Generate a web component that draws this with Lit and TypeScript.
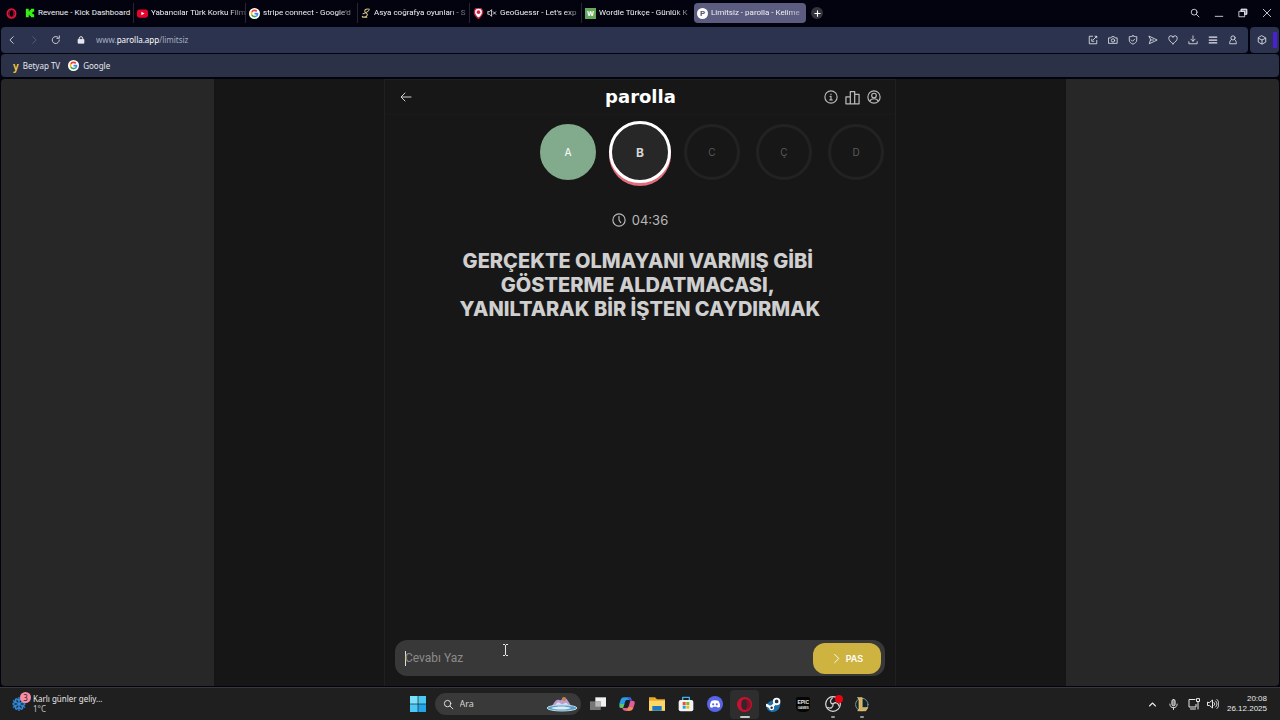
import { LitElement, html, svg, css, TemplateResult, SVGTemplateResult } from "lit";
import { customElement, property, state } from "lit/decorators.js";
import { classMap } from "lit/directives/class-map.js";

const icon = (size: number, body: SVGTemplateResult, width = 2): TemplateResult => html`
  <svg width=${size} height=${size} viewBox="0 0 24 24" fill="none" stroke="currentColor"
    stroke-width=${width} stroke-linecap="round" stroke-linejoin="round" aria-hidden="true">${body}</svg>`;

const glyphs: Record<string, SVGTemplateResult> = {
  operaLine: svg`<ellipse cx="12" cy="12" rx="8.8" ry="9.6" stroke="#e8153c" stroke-width="4"/><ellipse cx="12" cy="12" rx="5" ry="8" stroke="#a80d2c" stroke-width="2"/>`,
  kick: svg`<path d="M2 2h7v6h2V5h3V2h8v7h-3v2h-2v2h2v2h3v7h-8v-3h-3v-3H9v6H2z" fill="#37f013" stroke="none"/>`,
  youtube: svg`<rect x="0" y="3" width="24" height="18" rx="5" fill="#e4042e" stroke="none"/><path d="M9.500 8v8l7-4z" fill="#fff" stroke="none"/>`,
  google: svg`<circle cx="12" cy="12" r="12" fill="#fff" stroke="none"/>
    <g stroke-width="3.600" stroke-linecap="butt"><path d="M6.300 8.500A6.800 6.800 0 0 1 17 7.200" stroke="#ea4335"/><path d="M6.300 15.500a6.800 6.800 0 0 1 0-7.200" stroke="#fbbc05"/><path d="M16.800 16.900a6.800 6.800 0 0 1-10.500-1.500" stroke="#34a853"/><path d="M12 12.200h6.700a6.800 6.800 0 0 1-2 4.800" stroke="#4285f4"/></g>`,
  seterra: svg`<path d="M20 3C15 1 8 3 9 8s8 4 6 9-9 6-12 3M5 14c4-1 9-3 14-8M4 22h10" stroke="#dccb8a" stroke-width="2.500"/>`,
  pin: svg`<path d="M12 23S3 15 3 9a9 9 0 0 1 18 0c0 6-9 14-9 14z" fill="#fff" stroke="#c8203c" stroke-width="3"/><circle cx="12" cy="9" r="4" fill="#d41f3f" stroke="none"/>`,
  muted: svg`<path d="M2 9v6h4l5 5V4L6 9zM15 9l6 6M21 9l-6 6"/>`,
  plus: svg`<path d="M12 5v14M5 12h14"/>`,
  search: svg`<circle cx="10" cy="10" r="7"/><path d="m15.500 15.500 6 6"/>`,
  minimize: svg`<path d="M3 20h18"/>`,
  restore: svg`<path d="M8 8V3h13v12h-5"/><rect x="3" y="8" width="13" height="13"/><path d="M8 3h13v12h-5V8H8z" fill="currentColor" fill-opacity=".5"/>`,
  close: svg`<path d="m3 3 18 18M21 3 3 21"/>`,
  back: svg`<path d="m15 4-8 8 8 8"/>`,
  forward: svg`<path d="m9 4 8 8-8 8"/>`,
  reload: svg`<path d="M20 12a8.500 8.500 0 1 1-3-6.500M20 2v6h-6"/>`,
  lock: svg`<rect x="3" y="10" width="18" height="12" rx="1" fill="currentColor"/><path d="M7 10V7a5 5 0 0 1 10 0v3" stroke-width="3"/>`,
  edit: svg`<path d="M11 3H3v18h18v-8M21 3l-9 9M9 10v5h5M17 3h4v4"/>`,
  camera: svg`<path d="M2 7h5l2-3h6l2 3h5v13H2z"/><circle cx="12" cy="13" r="4"/>`,
  shield: svg`<path d="M12 2c3 2 6 2 9 2v8c0 5-4 8-9 10-5-2-9-5-9-10V4c3 0 6 0 9-2z"/><path d="m8 12 3 3 5-5"/>`,
  send: svg`<path d="M3 3 22 12 3 21l3-9zM6 12h7"/>`,
  heart: svg`<path d="M12 21C5 16 2 12 2 8a5 5 0 0 1 10-2 5 5 0 0 1 10 2c0 4-3 8-10 13z"/>`,
  download: svg`<path d="M12 2v13M7 10l5 5 5-5M2 16v5h20v-5"/>`,
  menu: svg`<path d="M3 5h18M3 12h18M3 19h18" stroke-width="3"/>`,
  person: svg`<circle cx="12" cy="7" r="5"/><path d="M8 11c-3 2-4 5-4 10h16c0-5-1-8-4-10"/>`,
  cube: svg`<path d="m12 2 9 5v10l-9 5-9-5V7zM4 8l8 4 8-4M12 12v9"/>`,
  arrow: svg`<path d="M22 12H3M10 4l-8 8 8 8"/>`,
  info: svg`<circle cx="12" cy="12" r="10.500"/><path d="M10.500 11H12v6M10 17h4M12 7v.5"/>`,
  chart: svg`<path d="M1.500 11h7v11h-7zM8.500 2.500h7V22h-7zM15.500 7h7v15h-7z"/>`,
  account: svg`<circle cx="12" cy="12" r="10.500"/><circle cx="12" cy="9.500" r="4"/><path d="M5 19c1-3 3-4 7-4s6 1 7 4"/>`,
  clock: svg`<circle cx="12" cy="12" r="10.500"/><path d="M12 5.500V12l3 4.500"/>`,
  chevron: svg`<path d="m8 3 9 9-9 9"/>`,
  up: svg`<path d="m4 16 8-8 8 8"/>`,
  mic: svg`<rect x="8.500" y="1" width="7" height="14" rx="3.500" fill="currentColor" fill-opacity=".5"/><path d="M4 11c0 5 3 8 8 8s8-3 8-8M12 19v4"/>`,
  network: svg`<path d="M14 3H2v15h14v-5M5 22h10M20 8v14M17 2v5h6V2z"/>`,
  volume: svg`<path d="M1 9v6h4l6 5V4L5 9zM14 9c2 2 2 4 0 6M17 6c4 4 4 8 0 12M20 3c5 5 5 13 0 18"/>`,
  snow: svg`<g stroke="#2f87d6" stroke-width="2.500"><path d="M12 1v22M2.500 6.500l19 11M21.500 6.500l-19 11M8 3l4 4 4-4M8 21l4-4 4 4M2 11l5-2-1-5M22 13l-5 2 1 5M22 11l-5-2 1-5M2 13l5 2-1 5"/></g>`,
  windows: svg`<g stroke="none" fill="#4cc8f5"><path d="M0 0h11.500v11.500H0z" fill="#7be0fb"/><path d="M12.500 0H24v11.500H12.500z"/><path d="M0 12.500h11.500V24H0z"/><path d="M12.500 12.500H24V24H12.500z" fill="#22a4e8"/></g>`,
  tasks: svg`<g stroke="none"><path d="M8 2h16v14H8z" fill="#f1f1f1"/><path d="M0 8h16v13H0z" fill="#777"/><path d="M8 8h8v8H8z" fill="#b8b8b8"/></g>`,
  copilot: svg`<g stroke="none"><path d="M8 2h8c2 0 2 2 3 4H12c-3 0-3 4-5 10H4c-5 0-4-4-2-9 1-3 2-5 6-5z" fill="#2a9ce4"/><path d="M16 22H9c-3 0-3-2-4-4h6c4 0 4-5 6-11h3c5 0 4 4 2 9-1 4-2 6-6 6z" fill="#e25b9a"/><path d="M2 12h6l-2 6H4c-4 0-4-2-2-6z" fill="#63c45b"/><path d="M16 2h-5c3 1 4 5 6 5h3z" fill="#3b56d9"/><path d="M9 22c3 0 4-2 5-5h7c-1 3-2 5-5 5z" fill="#f09148"/></g>`,
  folder: svg`<g stroke="none"><path d="M0 2h9l3 3h12v17H0z" fill="#e9a827"/><path d="M0 7h24v15H0z" fill="#fcd667"/><path d="M5 15h14v7H5z" fill="#1779c5"/></g>`,
  store: svg`<path d="M7 7V2h10v5" stroke="#3fb5ec"/><rect x="1" y="6" width="22" height="17" rx="3" fill="#f3f3f3" stroke="none"/><g stroke="none"><path d="M7 9h4.500v4.500H7z" fill="#ee5030"/><path d="M12.500 9H17v4.500h-4.500z" fill="#7ab929"/><path d="M7 14.500h4.500V19H7z" fill="#24a0e2"/><path d="M12.500 14.500H17V19h-4.500z" fill="#f8ba17"/></g>`,
  discord: svg`<circle cx="12" cy="12" r="12" fill="#5964e8" stroke="none"/><path d="M7 7c3-1 7-1 10 0 2 3 3 6 2.500 9-1 1-3 1.500-3.500 1.500L15 16H9l-1 1.500c-1 0-3-.5-3.500-1.500C4 13 5 10 7 7z" fill="#fff" stroke="none"/><circle cx="9.300" cy="12.500" r="1.600" fill="#5964e8" stroke="none"/><circle cx="14.700" cy="12.500" r="1.600" fill="#5964e8" stroke="none"/>`,
  opera: svg`<circle cx="12" cy="12" r="12" fill="#c9122f" stroke="none"/><path d="M9 4c7-3 13 2 13 8s-6 11-13 8c8-1 8-15 0-16z" fill="#8e0d28" stroke="none"/><ellipse cx="11.500" cy="12" rx="4.700" ry="8" fill="#32262b" stroke="none"/>`,
  steam: svg`<path d="M0 14C2 8 8 5 14 5l9 5c0 8-5 14-12 14C5 24 1 20 0 14z" fill="#1c6fa8" stroke="none"/><circle cx="17" cy="7" r="4.500" fill="#21344a" stroke="#fff" stroke-width="3"/><path d="m1 13 7 4 5-5" stroke="#fff" stroke-width="4"/><circle cx="9" cy="17" r="3" stroke="#fff" fill="#21344a"/>`,
  obs: svg`<circle cx="12" cy="12" r="11" fill="#1c1c1c" stroke="#ddd" stroke-width="1.800"/><g stroke="#ccc" stroke-width="2"><path d="M12 12C7 11 7 6 11 3M12 12c4-4 8-1 9 3M12 12c1 5-4 8-8 5"/></g>`,
  league: svg`<circle cx="12.500" cy="12" r="10" fill="#102528" stroke="#84989a" stroke-width="1.500"/><path d="M6 1h7v16h9l-3 5H6l2-3V4z" fill="#d5af58" stroke="#f0dd9b" stroke-width="1"/>`,
};

@customElement("browser-chrome")
export class BrowserChrome extends LitElement {
  @property() address = "";

  static styles = css`
    :host { display: block; font: 8px/12px "Noto Sans", sans-serif; color: #e6e7ee; background: #02030f; }
    svg { display: block; flex: none; }
    button { display: grid; place-items: center; padding: 0; border: 0; background: none; color: inherit; font: inherit; }
    a { color: inherit; text-decoration: none; }
    .strip { display: flex; align-items: center; height: 26px; }
    .brand { width: 22px; }
    .tabs { display: flex; min-width: 0; }
    .tab { display: flex; align-items: center; gap: 3px; box-sizing: border-box; width: 112px; height: 20px;
      padding: 0 1px 0 3px; border-right: 1px solid #252631; font-family: Roboto, sans-serif; color: #f0f0f4; }
    .tab.last { border-color: transparent; }
    .tab.active { background: #5c5c80; border: 0; border-radius: 4px; }
    .label { flex: 1; white-space: nowrap; text-align: left; mask-image: linear-gradient(90deg, #000 80%, #0004); }
    .full { mask-image: none; }
    .badge { display: block; width: 11px; flex: none; font-weight: 700; font-size: 8px; line-height: 11px; text-align: center; color: #fff; }
    .green { background: #65a85d; }
    .round { border-radius: 50%; background: #fff; color: #55557a; }
    .add { width: 12px; height: 12px; margin-left: 5px; border-radius: 50%; background: #33343d; color: #fff; }
    .window { display: flex; margin-left: auto; padding-right: 1px; }
    .window button { width: 24px; height: 24px; }
    .bars { display: flex; gap: 2px; padding: 1px 1px 0; }
    .bar { display: flex; align-items: center; height: 26px; border-radius: 4px; background: #2b334e; }
    .main { flex: 1; }
    .nav { width: 22px; height: 22px; }
    .dim { color: #59617a; }
    .lock { margin: 0 11px 0 10px; }
    .url { color: #a9aec0; }
    .url b { font-weight: 400; color: #fff; }
    .tools { display: flex; margin-left: auto; padding-right: 5px; }
    .tools button { width: 20px; height: 22px; }
    .side { width: 29px; justify-content: space-between; overflow: hidden; }
    .side button { padding-left: 7px; }
    .accent { width: 4px; height: 16px; margin-right: 2px; background: #4a1fd8; }
    .marks { gap: 8px; height: 23px; margin: 1px 1px 2px; padding-left: 12px; background: #2b3248; }
    .marks a { display: flex; align-items: center; gap: 4px; }
    .y { font-size: 10px; color: #ecc53d; font-weight: 700; }
  `;

  private tabs: { name: string; mark: TemplateResult; full?: boolean }[] = [
    { name: "Revenue - Kick Dashboard", mark: icon(10, glyphs.kick), full: true },
    { name: "Yabancılar Türk Korku Film", mark: icon(11, glyphs.youtube) },
    { name: "stripe connect - Google'd", mark: icon(11, glyphs.google) },
    { name: "Asya coğrafya oyunları - S", mark: icon(10, glyphs.seterra) },
    { name: "GeoGuessr - Let's exp", mark: html`${icon(11, glyphs.pin)}${icon(10, glyphs.muted)}` },
    { name: "Wordle Türkçe - Günlük K", mark: html`<span class="badge green">W</span>` },
    { name: "Limitsiz - parolla - Kelime", mark: html`<span class="badge round">P</span>` },
  ];

  render() {
    const last = this.tabs.length - 1;
    return html`
      <div class="strip">
        <button class="brand" aria-label="Opera">${icon(11, glyphs.operaLine)}</button>
        <div class="tabs" role="tablist">
          ${this.tabs.map((t, i) => html`
            <button role="tab" aria-selected=${i === last}
              class=${classMap({ tab: true, active: i === last, last: i === last - 1 })}>
              ${t.mark}<span class=${classMap({ label: true, full: !!t.full })}>${t.name}</span>
            </button>`)}
        </div>
        <button class="add" aria-label="Yeni sekme">${icon(9, glyphs.plus, 3)}</button>
        <div class="window">
          ${["search", "minimize", "restore", "close"].map((n) => html`<button aria-label=${n}>${icon(10, glyphs[n])}</button>`)}
        </div>
      </div>
      <div class="bars">
        <div class="bar main">
          <button class="nav" aria-label="Geri">${icon(10, glyphs.back)}</button>
          <button class="nav dim" aria-label="İleri">${icon(10, glyphs.forward)}</button>
          <button class="nav" aria-label="Yenile">${icon(10, glyphs.reload)}</button>
          <span class="lock">${icon(8, glyphs.lock)}</span>
          <a class="url" href="#">www.<b>${this.address}</b>/limitsiz</a>
          <div class="tools">
            ${["edit", "camera", "shield", "send", "heart", "download", "menu", "person"].map(
              (n) => html`<button aria-label=${n}>${icon(10, glyphs[n])}</button>`)}
          </div>
        </div>
        <div class="bar side"><button aria-label="Uzantılar">${icon(10, glyphs.cube)}</button><span class="accent"></span></div>
      </div>
      <nav class="bar marks">
        <a href="#"><span class="y">y</span>Betyap TV</a>
        <a href="#">${icon(11, glyphs.google)}Google</a>
      </nav>`;
  }
}

@customElement("parolla-game")
export class ParollaGame extends LitElement {
  @state() private letters = [
    { char: "A", status: "right" },
    { char: "B", status: "current" },
    { char: "C", status: "" },
    { char: "Ç", status: "" },
    { char: "D", status: "" },
  ];

  static styles = css`
    :host { display: flex; justify-content: center; box-sizing: border-box; min-height: 0; padding: 0 1px 1px;
      background: #02030f; font-family: Inter, sans-serif; color: #cfcfcf; }
    svg { display: block; flex: none; }
    button { padding: 0; border: 0; background: none; color: inherit; font: inherit; }
    .page { display: flex; flex: 1; justify-content: center; background: #272727; border-radius: 4px; overflow: hidden; }
    .middle { display: flex; justify-content: center; width: 66.6%; background: #161616; }
    .app { display: flex; flex-direction: column; box-sizing: border-box; width: 60%; min-width: 512px;
      border: solid #202020; border-width: 1px 1px 0; background: #171717; }
    header { display: grid; grid-template-columns: 1fr auto 1fr; align-items: center; height: 34px; padding: 0 14px 0 15px; border-bottom: 1px solid #1a1a1a; }
    .icons { display: flex; justify-content: flex-end; gap: 7px; color: #b9b9b9; }
    h1 { margin: 0; font: 700 18px/24px "DejaVu Sans", sans-serif; color: #fff; }
    .letters { display: grid; grid-template-columns: repeat(7, 72px); justify-content: center; align-items: center;
      height: 74px; margin: 0; padding: 0; list-style: none; }
    .letters li { display: grid; place-items: center; justify-self: center; box-sizing: border-box; width: 56px; height: 56px;
      border: 3px solid #222; border-radius: 50%; font-size: 10px; color: #5a5a5a; }
    .letters .right { grid-column-start: 3; border-color: #82aa8c; background: #82aa8c; color: #eef5ef; font-weight: 500; }
    .letters .current { width: 62px; height: 62px; border-color: #fff; background: #272727; box-shadow: 0 3px 0 #e06c7c; color: #d5d5d5; font-weight: 700; font-size: 12px; }
    .timer { display: flex; align-items: center; justify-content: center; gap: 6px; margin-top: 21px; font-size: 13px; line-height: 20px; color: #b9b9b9; }
    .question { margin: 19px 0 0; font: 800 20px/24px Inter, sans-serif; text-align: center; }
    form { display: flex; align-items: center; margin: auto 10px 10px; padding: 2px 4px 2px 10px; height: 32px; border-radius: 12px; background: #383838; }
    input { flex: 1; min-width: 0; padding: 0; border: 0; outline: 0; background: none; color: #ddd; font: 12px/20px Roboto, sans-serif; }
    input::placeholder { color: #8b8b8b; opacity: 1; }
    .caret { width: 1px; height: 15px; margin-right: -1px; background: #ddd; }
    .pass { display: flex; align-items: center; justify-content: center; gap: 4px; width: 68px; height: 31px;
      border-radius: 12px; background: #cfb340; color: #fff; font-size: 9px; font-weight: 600; }
  `;

  render() {
    return html`
      <div class="page"><div class="middle"><main class="app">
        <header>
          <button aria-label="Geri">${icon(12, glyphs.arrow)}</button>
          <h1>parolla</h1>
          <div class="icons">
            <button aria-label="Bilgi">${icon(14, glyphs.info)}</button>
            <button aria-label="İstatistik">${icon(15, glyphs.chart)}</button>
            <button aria-label="Hesap">${icon(14, glyphs.account)}</button>
          </div>
        </header>
        <ol class="letters">${this.letters.map((l) => html`<li class=${l.status}>${l.char}</li>`)}</ol>
        <div class="timer">${icon(14, glyphs.clock)}<time>04:36</time></div>
        <p class="question">GERÇEKTE OLMAYANI VARMIŞ GİBİ&nbsp;<br>GÖSTERME ALDATMACASI,&nbsp;<br>YANILTARAK BİR İŞTEN CAYDIRMAK</p>
        <form @submit=${(e: Event) => e.preventDefault()}>
          <span class="caret"></span>
          <input type="text" aria-label="Cevabı Yaz" placeholder="Cevabı Yaz" autocomplete="off">
          <button class="pass" type="button">${icon(11, glyphs.chevron)}PAS</button>
        </form>
      </main></div></div>`;
  }
}

@customElement("task-bar")
export class TaskBar extends LitElement {
  static styles = css`
    :host { display: grid; grid-template-columns: 1fr auto 1fr; align-items: center; box-sizing: border-box; height: 33px;
      border-top: 1px solid #383838; background: #1f1f1f; font: 8px/10px "Noto Sans", sans-serif; color: #e8e8e8; }
    svg { display: block; flex: none; }
    button { position: relative; display: grid; place-items: center; padding: 0; border: 0; background: none; color: inherit; font: inherit; }
    .weather { display: flex; align-items: center; justify-self: start; gap: 7px; padding-left: 12px; text-align: left; }
    .weather small { display: block; font-size: 8px; color: #c4c4c4; }
    .count { position: absolute; left: 20px; top: -2px; width: 11px; height: 11px; border-radius: 50%; background: #f58da5; color: #481520; line-height: 11px; text-align: center; }
    .center { display: flex; align-items: center; }
    .cell { width: 29px; height: 29px; border-radius: 4px; }
    .search { display: flex; align-items: center; gap: 6px; box-sizing: border-box; width: 146px; height: 22px; margin: 0 3px 0 2px; padding: 0 3px 0 8px; border-radius: 11px; background: #393939; }
    .search input { flex: 1; min-width: 0; padding: 0; border: 0; outline: 0; background: none; font: 9px/12px "Noto Sans", sans-serif; }
    .search input::placeholder { color: #d4d4d4; opacity: 1; }
    .apps { display: flex; justify-content: space-between; width: 293px; }
    .active { background: #2e2e2e; }
    .run::after { content: ""; position: absolute; bottom: 1px; width: 4px; height: 2px; border-radius: 1px; background: #969696; }
    .active::after { width: 10px; background: #c9c9c9; }
    .dot { position: absolute; right: 4px; top: 5px; width: 8px; height: 8px; border-radius: 50%; background: #e80512; }
    .epic { display: grid; justify-items: center; align-content: center; width: 14px; height: 15px; border-radius: 2px 2px 5px 5px; background: #050505; color: #e4e4e4; font: 700 5px/7px "Liberation Sans", sans-serif; }
    .epic small { font-size: 3px; line-height: 4px; }
    .tray { display: flex; align-items: center; justify-self: end; padding-right: 13px; }
    .tray button { width: 21px; height: 24px; }
    .tray .near { width: 16px; }
    .clock { margin-left: 6px; font-family: "Liberation Sans", sans-serif; text-align: right; }
    .clock time { display: block; }
  `;

  render() {
    const app = (name: string, cls = "", size = 16) =>
      html`<button class="cell ${cls}" aria-label=${name}>${icon(size, glyphs[name])}</button>`;
    return html`
      <button class="weather">${icon(14, glyphs.snow)}<span class="count">3</span>
        <span>Karlı günler geliy...<small>1°C</small></span></button>
      <div class="center">
        ${app("windows")}
        <label class="search">${icon(11, glyphs.search)}
          <input type="search" placeholder="Ara" aria-label="Ara">
          <svg width="32" height="16" viewBox="0 0 32 16" aria-hidden="true">
            <path d="M4 12C7 10 8 5 11 4s3 2 5-1 4-1 6 2 3 5 5 7z" fill="#b79fd0"/>
            <circle cx="18" cy="3" r="2" fill="#c7823d"/>
            <path d="M8 12c2-5 4-7 6-5s3 1 5 0 4 3 5 5z" fill="#ead9ec"/>
            <ellipse cx="16" cy="12" rx="15" ry="3" fill="#5e9cc6" stroke="#b5dbea" stroke-width="1"/>
            <path d="M5 12c6-2 15-2 20 0-5 2-15 2-20 0z" fill="#d9eef5"/>
          </svg>
        </label>
        <div class="apps">
          ${app("tasks")}${app("copilot")}${app("folder")}${app("store")}${app("discord")}
          ${app("opera", "active run", 15)}${app("steam", "", 15)}
          <button class="cell" aria-label="Epic Games"><span class="epic">EPIC<small>GAMES</small></span></button>
          <button class="cell run" aria-label="OBS">${icon(16, glyphs.obs)}<span class="dot"></span></button>
          ${app("league", "run", 15)}
        </div>
      </div>
      <div class="tray">
        <button aria-label="Gizli simgeler">${icon(9, glyphs.up, 3)}</button>
        <button aria-label="Mikrofon">${icon(11, glyphs.mic)}</button>
        <button aria-label="Ağ">${icon(12, glyphs.network)}</button>
        <button class="near" aria-label="Ses">${icon(12, glyphs.volume)}</button>
        <div class="clock"><time>20:08</time><time>26.12.2025</time></div>
      </div>`;
  }
}

@customElement("app-root")
export class AppRoot extends LitElement {
  static styles = css`
    :host { position: relative; display: grid; grid-template-rows: auto 1fr auto; height: 100vh; overflow: hidden; background: #02030f; }
    .pointer { position: absolute; left: 502px; top: 644px; pointer-events: none; }
  `;

  render() {
    return html`
      <browser-chrome address="parolla.app"></browser-chrome>
      <parolla-game></parolla-game>
      <task-bar></task-bar>
      <svg class="pointer" width="7" height="12" viewBox="0 0 7 12" fill="none" stroke="#e8e8e8" aria-hidden="true">
        <path d="M1 .5h2M4 .5h2M3.500 1v10M1 11.500h2M4 11.500h2"/>
      </svg>`;
  }
}
